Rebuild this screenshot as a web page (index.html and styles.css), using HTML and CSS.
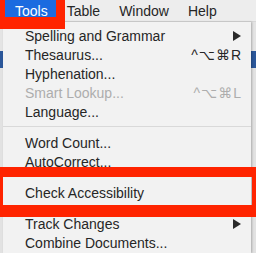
FILE: index.html
```html
<!DOCTYPE html>
<html lang="en">
<head>
  <meta charset="UTF-8">
  <title>Tools menu</title>
  <link rel="stylesheet" href="styles.css">
</head>
<body>
  <div class="menubar">
    <span class="title active">Tools</span>
    <span class="title">Table</span>
    <span class="title">Window</span>
    <span class="title">Help</span>
  </div>
  <ul class="menu">
    <li class="item"><span>Spelling and Grammar</span><span class="arrow"></span></li>
    <li class="item"><span>Thesaurus...</span><span class="keys">^⌥⌘R</span></li>
    <li class="item"><span>Hyphenation...</span></li>
    <li class="item disabled"><span>Smart Lookup...</span><span class="keys">^⌥⌘L</span></li>
    <li class="item"><span>Language...</span></li>
    <li class="sep"></li>
    <li class="item"><span>Word Count...</span></li>
    <li class="item"><span>AutoCorrect...</span></li>
    <li class="sep"></li>
    <li class="item"><span>Check Accessibility</span></li>
    <li class="sep"></li>
    <li class="item"><span>Track Changes</span><span class="arrow"></span></li>
    <li class="item"><span>Combine Documents...</span></li>
  </ul>

  <div class="mark mark-tools"></div>
  <div class="mark mark-check"></div>
</body>
</html>
```

FILE: styles.css
```css
html, body {
  margin: 0;
  height: 100%;
  overflow: hidden;
}
body {
  position: relative;
  display: flex;
  flex-direction: column;
  font-family: "Liberation Sans", Arial, "DejaVu Sans", sans-serif;
  font-size: 14px;
  color: #262626;
  background: linear-gradient(to bottom, #e4e4e4 0 51px, #2b579a 51px 68px, #e2e2e2 68px);
}
.menubar {
  display: flex;
  flex: none;
  height: 22px;
  padding-left: 5px;
  background: #ededed;
  border-bottom: 1px solid #d8d8d8;
  box-sizing: border-box;
}
.title {
  display: flex;
  align-items: center;
  padding: 0 9px 0 10px;
  line-height: 22px;
}
.title + .title {
  padding-left: 10px;
}
.title.active {
  background: #1b6be0;
  color: #fff;
}
.menu {
  flex: 1;
  min-height: 0;
  overflow: hidden;
  list-style: none;
  margin: 0 5px 0 3px;
  padding: 4px 0 0;
  background: #f2f2f2;
  box-shadow: 1px 0 2px rgba(0,0,0,0.25);
}
.item {
  display: flex;
  align-items: center;
  justify-content: space-between;
  height: 19px;
  padding: 0 9px 0 22px;
}
.item.disabled {
  color: #adadad;
}
.keys {
  letter-spacing: 1px;
}
.arrow {
  width: 0;
  height: 0;
  margin-right: 1px;
  border-top: 5px solid transparent;
  border-bottom: 5px solid transparent;
  border-left: 8px solid #2a2a2a;
}
.sep {
  height: 1px;
  margin: 5px 0 6px;
  background: #d9d9d9;
}
.mark {
  position: absolute;
  box-sizing: border-box;
  border: 0 solid #ff2400;
}
.mark-tools {
  left: 0;
  top: 0;
  width: 65px;
  height: 29px;
  border-width: 0 9px 12px 5px;
}
.mark-check {
  left: 0;
  top: 167px;
  width: 256px;
  height: 50px;
  border-width: 10px 4px 12px 3px;
}
```
